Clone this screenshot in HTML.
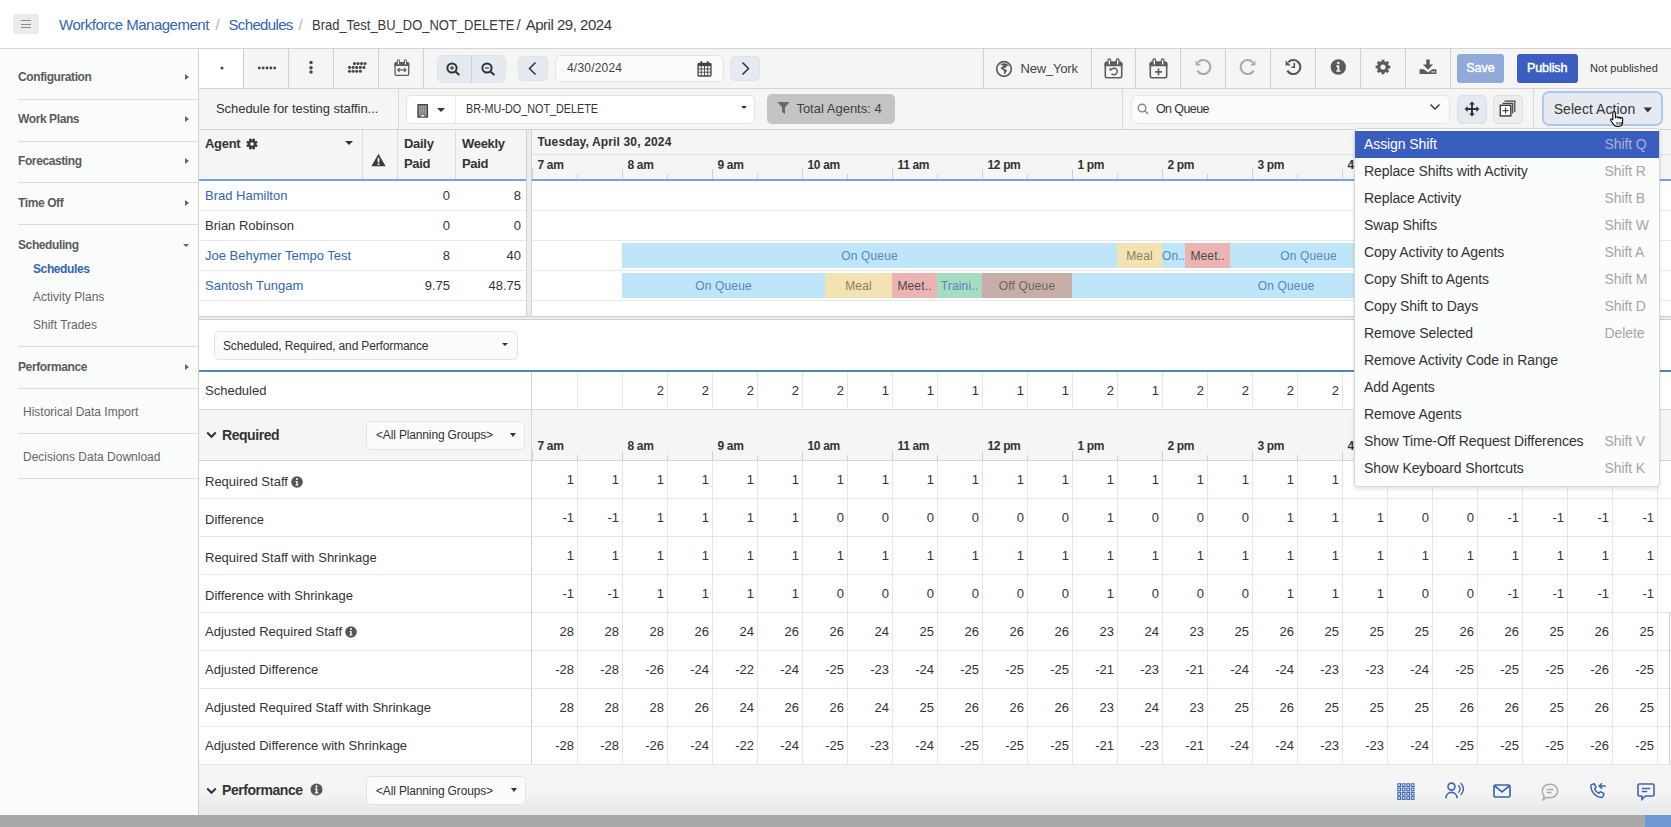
<!DOCTYPE html><html><head><meta charset="utf-8"><title>Schedule</title><style>
*{box-sizing:border-box;margin:0;padding:0}
html,body{width:1671px;height:827px;overflow:hidden;background:#fff}
body{position:relative;font-family:"Liberation Sans",sans-serif;color:#333;font-size:13px}
.abs{position:absolute}
.t{position:absolute;white-space:nowrap;line-height:1}
.vl{position:absolute;width:1px;background:#d2d2d2}
.hl{position:absolute;height:1px;background:#d2d2d2}
.b{font-weight:bold}
.lnk{color:#3266b5}
</style></head><body>
<div class="abs" style="left:13px;top:14px;width:26px;height:20px;background:#ebebeb;border-radius:3px"></div>
<div class="abs" style="left:21px;top:20px;width:10px;height:1.4px;background:#8c8c8c"></div>
<div class="abs" style="left:21px;top:23.5px;width:10px;height:1.4px;background:#8c8c8c"></div>
<div class="abs" style="left:21px;top:27px;width:10px;height:1.4px;background:#8c8c8c"></div>
<div class="t" style="left:59px;top:17.15px;font-size:15px;color:#3266b5;letter-spacing:-0.5px;">Workforce Management</div>
<div class="t" style="left:215.5px;top:17.15px;font-size:15px;color:#b5b5b5;">/</div>
<div class="t" style="left:228.5px;top:17.15px;font-size:15px;color:#3266b5;letter-spacing:-0.65px;">Schedules</div>
<div class="t" style="left:298.5px;top:17.15px;font-size:15px;color:#b5b5b5;">/</div>
<div class="t" style="left:312.2px;top:17.15px;font-size:15px;color:#3a3a3a;transform:scaleX(0.8645);transform-origin:0 0">Brad_Test_BU_DO_NOT_DELETE</div>
<div class="t" style="left:516.5px;top:17.15px;font-size:15px;color:#3a3a3a;">/</div>
<div class="t" style="left:525.7px;top:17.15px;font-size:15px;color:#3a3a3a;letter-spacing:-0.48px;">April 29, 2024</div>
<div class="abs" style="left:0px;top:48px;width:1671px;height:1px;background:#d4d4d4"></div>
<div class="abs" style="left:0px;top:49px;width:198px;height:766px;background:#fafbfb"></div>
<div class="abs" style="left:198px;top:49px;width:1px;height:766px;background:#d0d0d0"></div>
<div class="t" style="left:18px;top:71.08px;font-size:12px;color:#5b5b5b;font-weight:700;letter-spacing:-0.4px;">Configuration</div>
<div class="abs" style="left:185px;top:73.6px;width:0;height:0;border-top:3.4px solid transparent;border-bottom:3.4px solid transparent;border-left:4.4px solid #666"></div>
<div class="abs" style="left:18px;top:98.5px;width:180px;height:1px;background:#dcdcdc"></div>
<div class="t" style="left:18px;top:113.28px;font-size:12px;color:#5b5b5b;font-weight:700;letter-spacing:-0.4px;">Work Plans</div>
<div class="abs" style="left:185px;top:115.8px;width:0;height:0;border-top:3.4px solid transparent;border-bottom:3.4px solid transparent;border-left:4.4px solid #666"></div>
<div class="abs" style="left:18px;top:140.5px;width:180px;height:1px;background:#dcdcdc"></div>
<div class="t" style="left:18px;top:155.28px;font-size:12px;color:#5b5b5b;font-weight:700;letter-spacing:-0.4px;">Forecasting</div>
<div class="abs" style="left:185px;top:157.8px;width:0;height:0;border-top:3.4px solid transparent;border-bottom:3.4px solid transparent;border-left:4.4px solid #666"></div>
<div class="abs" style="left:18px;top:182.4px;width:180px;height:1px;background:#dcdcdc"></div>
<div class="t" style="left:18px;top:197.28px;font-size:12px;color:#5b5b5b;font-weight:700;letter-spacing:-0.4px;">Time Off</div>
<div class="abs" style="left:185px;top:199.8px;width:0;height:0;border-top:3.4px solid transparent;border-bottom:3.4px solid transparent;border-left:4.4px solid #666"></div>
<div class="abs" style="left:18px;top:224.2px;width:180px;height:1px;background:#dcdcdc"></div>
<div class="t" style="left:18px;top:239.18px;font-size:12px;color:#5b5b5b;font-weight:700;letter-spacing:-0.4px;">Scheduling</div>
<div class="abs" style="left:183px;top:243.5px;width:0;height:0;border-left:3.5px solid transparent;border-right:3.5px solid transparent;border-top:3.3px solid #666"></div>
<div class="t" style="left:33px;top:262.78px;font-size:12px;color:#3266b5;font-weight:700;letter-spacing:-0.4px;">Schedules</div>
<div class="t" style="left:33px;top:291.08px;font-size:12px;color:#666;">Activity Plans</div>
<div class="t" style="left:33px;top:318.68px;font-size:12px;color:#666;">Shift Trades</div>
<div class="abs" style="left:18px;top:346px;width:180px;height:1px;background:#dcdcdc"></div>
<div class="t" style="left:18px;top:360.88px;font-size:12px;color:#5b5b5b;font-weight:700;letter-spacing:-0.4px;">Performance</div>
<div class="abs" style="left:185px;top:363.6px;width:0;height:0;border-top:3.4px solid transparent;border-bottom:3.4px solid transparent;border-left:4.4px solid #666"></div>
<div class="abs" style="left:18px;top:388px;width:180px;height:1px;background:#dcdcdc"></div>
<div class="t" style="left:23px;top:405.78px;font-size:12px;color:#666;">Historical Data Import</div>
<div class="abs" style="left:18px;top:433px;width:180px;height:1px;background:#dcdcdc"></div>
<div class="t" style="left:23px;top:450.78px;font-size:12px;color:#666;">Decisions Data Download</div>
<div class="abs" style="left:18px;top:478px;width:180px;height:1px;background:#dcdcdc"></div>
<div class="abs" style="left:199px;top:49px;width:1472px;height:40px;background:#f5f5f5"></div>
<div class="abs" style="left:199px;top:49px;width:44px;height:39px;background:#fff"></div>
<div class="abs" style="left:199px;top:88px;width:1472px;height:1px;background:#d4d4d4"></div>
<div class="abs" style="left:243px;top:49px;width:1px;height:39px;background:#cfcfcf"></div>
<div class="abs" style="left:288px;top:49px;width:1px;height:39px;background:#cfcfcf"></div>
<div class="abs" style="left:333px;top:49px;width:1px;height:39px;background:#cfcfcf"></div>
<div class="abs" style="left:378px;top:49px;width:1px;height:39px;background:#cfcfcf"></div>
<div class="abs" style="left:423px;top:49px;width:1px;height:39px;background:#cfcfcf"></div>
<div class="abs" style="left:983px;top:49px;width:1px;height:39px;background:#cfcfcf"></div>
<div class="abs" style="left:1091px;top:49px;width:1px;height:39px;background:#cfcfcf"></div>
<div class="abs" style="left:1135px;top:49px;width:1px;height:39px;background:#cfcfcf"></div>
<div class="abs" style="left:1180px;top:49px;width:1px;height:39px;background:#cfcfcf"></div>
<div class="abs" style="left:1225px;top:49px;width:1px;height:39px;background:#cfcfcf"></div>
<div class="abs" style="left:1270px;top:49px;width:1px;height:39px;background:#cfcfcf"></div>
<div class="abs" style="left:1315px;top:49px;width:1px;height:39px;background:#cfcfcf"></div>
<div class="abs" style="left:1360px;top:49px;width:1px;height:39px;background:#cfcfcf"></div>
<div class="abs" style="left:1405px;top:49px;width:1px;height:39px;background:#cfcfcf"></div>
<div class="abs" style="left:1450px;top:49px;width:1px;height:39px;background:#cfcfcf"></div>
<svg class="abs" style="left:216px;top:61.7px;" width="12" height="12" viewBox="0 0 12 12"><circle cx="6" cy="6" r="1.6" fill="#4a4a4a"/></svg>
<svg class="abs" style="left:255px;top:61.7px;" width="24" height="12" viewBox="0 0 24 12"><circle cx="4.30" cy="6" r="1.45" fill="#4a4a4a"/><circle cx="8.15" cy="6" r="1.45" fill="#4a4a4a"/><circle cx="12.00" cy="6" r="1.45" fill="#4a4a4a"/><circle cx="15.85" cy="6" r="1.45" fill="#4a4a4a"/><circle cx="19.70" cy="6" r="1.45" fill="#4a4a4a"/></svg>
<svg class="abs" style="left:305.3px;top:58px;" width="12" height="22" viewBox="0 0 12 22"><circle cx="6" cy="4.6" r="1.75" fill="#4a4a4a"/><circle cx="6" cy="9.7" r="1.75" fill="#4a4a4a"/><circle cx="6" cy="14.1" r="1.75" fill="#4a4a4a"/></svg>
<svg class="abs" style="left:346px;top:60.4px;" width="22" height="15" viewBox="0 0 22 15"><circle cx="8.5" cy="3.6" r="1.55" fill="#4a4a4a"/><circle cx="12.0" cy="3.6" r="1.55" fill="#4a4a4a"/><circle cx="15.5" cy="3.6" r="1.55" fill="#4a4a4a"/><circle cx="19.0" cy="3.6" r="1.55" fill="#4a4a4a"/><circle cx="3.5" cy="7.4" r="1.55" fill="#4a4a4a"/><circle cx="7.1" cy="7.4" r="1.55" fill="#4a4a4a"/><circle cx="10.7" cy="7.4" r="1.55" fill="#4a4a4a"/><circle cx="14.3" cy="7.4" r="1.55" fill="#4a4a4a"/><circle cx="17.9" cy="7.4" r="1.55" fill="#4a4a4a"/><circle cx="3.5" cy="11.2" r="1.55" fill="#4a4a4a"/><circle cx="7.1" cy="11.2" r="1.55" fill="#4a4a4a"/><circle cx="10.7" cy="11.2" r="1.55" fill="#4a4a4a"/><circle cx="14.3" cy="11.2" r="1.55" fill="#4a4a4a"/></svg>
<svg class="abs" style="left:394px;top:58.8px;" width="15.77" height="17.43" viewBox="0 0 15.77 17.43"><g transform="scale(0.83)"><rect x="1.3" y="4.3" width="16.4" height="15.4" rx="1.7" fill="none" stroke="#5e5e5e" stroke-width="1.6"/><path d="M0.5 5.9a2.4 2.4 0 0 1 2.4-2.4h13.2a2.4 2.4 0 0 1 2.4 2.4v2.4H0.5z" fill="#5e5e5e"/><rect x="4" y="1" width="2.6" height="6.2" rx="1.3" fill="#fff" stroke="#5e5e5e" stroke-width="1.3"/><rect x="12.4" y="1" width="2.6" height="6.2" rx="1.3" fill="#fff" stroke="#5e5e5e" stroke-width="1.3"/><path d="M4.5 13.2h10M6.8 11l-2.3 2.2 2.3 2.2M12.2 11l2.3 2.2-2.3 2.2" fill="none" stroke="#5e5e5e" stroke-width="1.5"/></g></svg>
<div class="abs" style="left:436.5px;top:54.5px;width:69px;height:28.5px;background:#e5e9f0;border:1px solid #dfe3ea;border-radius:6px"></div>
<div class="abs" style="left:471px;top:55px;width:1px;height:28px;background:#cdd2d9"></div>
<svg class="abs" style="left:445.3px;top:60.8px;" width="16" height="16" viewBox="0 0 16 16"><circle cx="7" cy="7" r="4.6" fill="none" stroke="#333" stroke-width="2"/><path d="M10.4 10.4l3.4 3.2" stroke="#333" stroke-width="2" stroke-linecap="round"/><path d="M5.1 7h3.8" stroke="#444" stroke-width="1.3"/><path d="M7 5.1v3.8" stroke="#444" stroke-width="1.3"/></svg>
<svg class="abs" style="left:480.4px;top:60.8px;" width="16" height="16" viewBox="0 0 16 16"><circle cx="7" cy="7" r="4.6" fill="none" stroke="#333" stroke-width="2"/><path d="M10.4 10.4l3.4 3.2" stroke="#333" stroke-width="2" stroke-linecap="round"/><path d="M5.1 7h3.8" stroke="#444" stroke-width="1.3"/></svg>
<div class="abs" style="left:518px;top:56px;width:30px;height:25px;background:#e5e9f0;border:1px solid #dfe3ea;border-radius:5px"></div>
<svg class="abs" style="left:525px;top:60px;" width="16" height="17" viewBox="0 0 16 17"><path d="M10.5 2.5L4.5 8.5l6 6" fill="none" stroke="#333" stroke-width="1.5"/></svg>
<div class="abs" style="left:730px;top:56px;width:30px;height:25px;background:#e5e9f0;border:1px solid #dfe3ea;border-radius:5px"></div>
<svg class="abs" style="left:737px;top:60px;" width="16" height="17" viewBox="0 0 16 17"><path d="M5.5 2.5l6 6-6 6" fill="none" stroke="#333" stroke-width="1.5"/></svg>
<div class="abs" style="left:554.5px;top:55px;width:169px;height:26.5px;background:#fbfbfb;border:1px solid #e2e4e8;border-radius:6px"></div>
<div class="t" style="left:567px;top:61.58px;font-size:12px;color:#444;letter-spacing:0.2px;">4/30/2024</div>
<svg class="abs" style="left:697px;top:60px;" width="15" height="17" viewBox="0 0 15 17"><rect x="1" y="3.5" width="13" height="12.5" rx="1" fill="none" stroke="#444" stroke-width="1.3"/><rect x="1" y="3.5" width="13" height="2.6" fill="#444"/><path d="M1 9h13M1 12.2h13M4.3 6v10M7.5 6v10M10.7 6v10" stroke="#444" stroke-width="0.9"/><rect x="3.4" y="1" width="1.8" height="4" rx="0.9" fill="#444"/><rect x="9.8" y="1" width="1.8" height="4" rx="0.9" fill="#444"/></svg>
<svg class="abs" style="left:995px;top:59.5px;" width="18" height="18" viewBox="0 0 18 18"><circle cx="9" cy="9" r="7.3" fill="none" stroke="#5e5e5e" stroke-width="1.7"/><path d="M5 4.5c1.5 0.3 2.6 0.6 3.2 1.4c-0.6 0.9-1.9 0.8-2.3 1.9c-0.3 1 0.7 1.7 1.7 1.9c1.2 0.2 1.3 1.3 1.3 2.4c0 1 0.4 2 1.1 2.5c0.5-1 0.7-2.1 1.4-2.8c0.8-0.7 0.6-1.8-0.2-2.3c-0.9-0.5-2-0.5-2.7-1.2c0.6-0.5 1.6-0.4 2.3-0.9c0.6-0.4 0.4-1.2 1.1-1.5c0.8-0.3 1.6 0.1 2.2 0.5c-0.7-1.6-2.2-2.8-4-3.1c-1.3-0.2-2.8 0-4.1 0.6z" fill="#5e5e5e"/></svg>
<div class="t" style="left:1020.6px;top:62.17px;font-size:13px;color:#444;letter-spacing:-0.2px;">New_York</div>
<svg class="abs" style="left:1103.5px;top:57.5px;" width="19.0" height="21.0" viewBox="0 0 19.0 21.0"><g transform="scale(1.0)"><rect x="1.3" y="4.3" width="16.4" height="15.4" rx="1.7" fill="none" stroke="#5e5e5e" stroke-width="1.6"/><path d="M0.5 5.9a2.4 2.4 0 0 1 2.4-2.4h13.2a2.4 2.4 0 0 1 2.4 2.4v2.4H0.5z" fill="#5e5e5e"/><rect x="4" y="1" width="2.6" height="6.2" rx="1.3" fill="#fff" stroke="#5e5e5e" stroke-width="1.3"/><rect x="12.4" y="1" width="2.6" height="6.2" rx="1.3" fill="#fff" stroke="#5e5e5e" stroke-width="1.3"/><path d="M7.4 11.3a3.3 3.3 0 1 1 0.1 4.4" fill="none" stroke="#5e5e5e" stroke-width="1.5"/><path d="M5.4 9.7l0.4 3.4 3-1.3z" fill="#5e5e5e"/></g></svg>
<svg class="abs" style="left:1148.5px;top:57.5px;" width="19.0" height="21.0" viewBox="0 0 19.0 21.0"><g transform="scale(1.0)"><rect x="1.3" y="4.3" width="16.4" height="15.4" rx="1.7" fill="none" stroke="#5e5e5e" stroke-width="1.6"/><path d="M0.5 5.9a2.4 2.4 0 0 1 2.4-2.4h13.2a2.4 2.4 0 0 1 2.4 2.4v2.4H0.5z" fill="#5e5e5e"/><rect x="4" y="1" width="2.6" height="6.2" rx="1.3" fill="#fff" stroke="#5e5e5e" stroke-width="1.3"/><rect x="12.4" y="1" width="2.6" height="6.2" rx="1.3" fill="#fff" stroke="#5e5e5e" stroke-width="1.3"/><path d="M9.5 10.4v6.8M6.1 13.8h6.8" stroke="#5e5e5e" stroke-width="1.7"/></g></svg>
<svg class="abs" style="left:1193.7px;top:57.2px;" width="18" height="18" viewBox="0 0 18 18"><g><path d="M4.3 5.2A7 7 0 1 1 3.3 13.6" fill="none" stroke="#a9a9a9" stroke-width="2.1"/><path d="M1.6 3.4v5.2h5.2z" fill="#a9a9a9"/></g></svg>
<svg class="abs" style="left:1238.5px;top:57.2px;" width="18" height="18" viewBox="0 0 18 18"><g transform="translate(18,0) scale(-1,1)"><path d="M4.3 5.2A7 7 0 1 1 3.3 13.6" fill="none" stroke="#a9a9a9" stroke-width="2.1"/><path d="M1.6 3.4v5.2h5.2z" fill="#a9a9a9"/></g></svg>
<svg class="abs" style="left:1283.5px;top:57.2px;" width="18" height="18" viewBox="0 0 18 18"><g><path d="M4.3 5.2A7 7 0 1 1 3.3 13.6" fill="none" stroke="#555" stroke-width="2.1"/><path d="M1.6 3.4v5.2h5.2z" fill="#555"/><path d="M10.3 6v4.3H7.5" fill="none" stroke="#555" stroke-width="1.6"/></g></svg>
<svg class="abs" style="left:1330px;top:59.1px;" width="17" height="17" viewBox="0 0 17 17"><circle cx="8.3" cy="8" r="7.7" fill="#5a5a5a"/><circle cx="8.3" cy="3.9" r="1.25" fill="#f5f5f5"/><path d="M6.4 6.3h2.9v4.9h1.1v1.6H6.3v-1.6h1.1V7.9h-1z" fill="#f5f5f5"/></svg>
<svg class="abs" style="left:1375.2px;top:59.3px;" width="16" height="16" viewBox="0 0 16 16"><path d="M13.44 6.67 L15.34 6.44 L15.34 9.56 L13.44 9.33 L12.79 10.91 L14.29 12.08 L12.08 14.29 L10.91 12.79 L9.33 13.44 L9.56 15.34 L6.44 15.34 L6.67 13.44 L5.09 12.79 L3.92 14.29 L1.71 12.08 L3.21 10.91 L2.56 9.33 L0.66 9.56 L0.66 6.44 L2.56 6.67 L3.21 5.09 L1.71 3.92 L3.92 1.71 L5.09 3.21 L6.67 2.56 L6.44 0.66 L9.56 0.66 L9.33 2.56 L10.91 3.21 L12.08 1.71 L14.29 3.92 L12.79 5.09Z" fill="#5a5a5a"/><circle cx="8" cy="8" r="5.8" fill="#5a5a5a"/><circle cx="8" cy="8" r="2.6" fill="#f5f5f5"/></svg>
<svg class="abs" style="left:1419px;top:58.5px;" width="18" height="16" viewBox="0 0 18 16"><path d="M7.3 0.6h3.4v5h3.4L9 10.8 3.9 5.6h3.4z" fill="#5a5a5a"/><path d="M0.6 10.2h4.2L9 13.4l4.2-3.2h4.2v4a0.9 0.9 0 0 1-0.9 0.9H1.5a0.9 0.9 0 0 1-0.9-0.9z" fill="#5a5a5a"/><rect x="12.5" y="12.2" width="1.4" height="1.4" fill="#f5f5f5"/><rect x="14.6" y="12.2" width="1.4" height="1.4" fill="#f5f5f5"/></svg>
<div class="abs" style="left:1457px;top:53.5px;width:47px;height:29.5px;background:#91aad9;border-radius:3px"></div>
<div class="t" style="left:1180.5px;width:600px;text-align:center;top:61.67px;font-size:12.5px;color:#fff;-webkit-text-stroke:0.45px #fff;">Save</div>
<div class="abs" style="left:1516.5px;top:53.5px;width:61.5px;height:29.5px;background:#3b5ec0;border-radius:3px"></div>
<div class="t" style="left:1247.2px;width:600px;text-align:center;top:61.67px;font-size:12.5px;color:#fff;-webkit-text-stroke:0.45px #fff;letter-spacing:-0.1px;">Publish</div>
<div class="t" style="left:1590px;top:62.89px;font-size:11px;color:#333;letter-spacing:0.05px;">Not published</div>
<div class="abs" style="left:199px;top:89px;width:1472px;height:40px;background:#f5f5f5"></div>
<div class="abs" style="left:199px;top:129px;width:1472px;height:1px;background:#d4d4d4"></div>
<div class="t" style="left:216px;top:102.07px;font-size:13px;color:#333;letter-spacing:-0.05px;">Schedule for testing staffin...</div>
<div class="abs" style="left:398px;top:89px;width:1px;height:40px;background:#d9d9d9"></div>
<div class="abs" style="left:1122px;top:89px;width:1px;height:40px;background:#d9d9d9"></div>
<div class="abs" style="left:1533px;top:89px;width:1px;height:40px;background:#d9d9d9"></div>
<div class="abs" style="left:405.5px;top:94.5px;width:349px;height:29px;background:#fff;border:1px solid #e3e3e3;border-radius:5px"></div>
<div class="abs" style="left:455px;top:95px;width:1px;height:28px;background:#ececec"></div>
<svg class="abs" style="left:417px;top:103.5px;" width="12" height="14" viewBox="0 0 12 14"><rect x="0.3" y="0.1" width="10.8" height="13.6" rx="0.6" fill="#444"/><rect x="1.5" y="1.4" width="8.4" height="11" fill="#777"/><path d="M2.7 1.4v9.6M4.7 1.4v8.4M6.7 1.4v8.4M8.7 1.4v9.6" stroke="#cfcfcf" stroke-width="0.6"/><path d="M3.6 12.6a2.1 1.6 0 0 1 4.2 0z" fill="#fff"/></svg>
<div class="abs" style="left:437px;top:108.3px;width:0;height:0;border-left:4.0px solid transparent;border-right:4.0px solid transparent;border-top:4.4px solid #333"></div>
<div class="t" style="left:466px;top:103.38px;font-size:12px;color:#333;transform:scaleX(0.9);transform-origin:0 0">BR-MU-DO_NOT_DELETE</div>
<div class="abs" style="left:740.5px;top:105.5px;width:0;height:0;border-left:3.5px solid transparent;border-right:3.5px solid transparent;border-top:3.9px solid #333"></div>
<div class="abs" style="left:767px;top:93.5px;width:127.5px;height:30.5px;background:#c4c4c4;border-radius:5px"></div>
<svg class="abs" style="left:777px;top:101px;" width="14" height="14" viewBox="0 0 14 14"><path d="M0.5 1h12L8 6.5v6.5l-3-2V6.5z" fill="#6a6a6a"/></svg>
<div class="t" style="left:796.4px;top:102.47px;font-size:13px;color:#404040;">Total Agents: 4</div>
<div class="abs" style="left:1131px;top:95px;width:319px;height:28.5px;background:#fbfbfb;border:1px solid #e6e6e6;border-radius:6px"></div>
<svg class="abs" style="left:1137px;top:103px;" width="13" height="13" viewBox="0 0 13 13"><circle cx="5" cy="5" r="3.8" fill="none" stroke="#888" stroke-width="1.4"/><path d="M7.8 7.8l3.2 3.2" stroke="#888" stroke-width="1.5"/></svg>
<div class="t" style="left:1156px;top:102.88px;font-size:12.5px;color:#333;letter-spacing:-0.6px;">On Queue</div>
<svg class="abs" style="left:1429px;top:102px;" width="12" height="10" viewBox="0 0 12 10"><path d="M1.5 2.5l4.5 4.5 4.5-4.5" fill="none" stroke="#333" stroke-width="1.4"/></svg>
<div class="abs" style="left:1457px;top:94.5px;width:30px;height:29px;background:#e5e9f0;border:1px solid #dde1e7;border-radius:5px"></div>
<svg class="abs" style="left:1464px;top:101px;" width="16" height="16" viewBox="0 0 16 16"><path d="M8 0.6l3 3H9v3.4h3.4V5l3 3-3 3V9H9v3.4h2l-3 3-3-3h2V9H3.6v2l-3-3 3-3v2H7V3.6H5z" fill="#333"/></svg>
<div class="abs" style="left:1493px;top:94.5px;width:29.5px;height:29px;background:#ececec;border:1px solid #dedede;border-radius:5px"></div>
<svg class="abs" style="left:1498px;top:99px;" width="19" height="19" viewBox="0 0 19 19"><rect x="2.3" y="6.3" width="10.5" height="10.6" fill="#fff" stroke="#444" stroke-width="1.5"/><path d="M7.55 8.6v6M4.6 11.6h5.9" stroke="#444" stroke-width="1.1"/><path d="M4.5 4.4H14.7V14.6M6.5 2.2H16.8V13" fill="none" stroke="#444" stroke-width="1.2"/></svg>
<div class="abs" style="left:1541.5px;top:91px;width:121px;height:35px;background:#e6eaf0;border:2px solid #a9c8f2;border-radius:7px"></div>
<div class="t" style="left:1553.7px;top:101.66px;font-size:14px;color:#333;letter-spacing:0.05px;">Select Action</div>
<svg class="abs" style="left:1642.5px;top:106.5px;" width="10" height="7" viewBox="0 0 10 7"><path d="M0.6 0.6h8.4L4.8 5.6z" fill="#333"/></svg>
<div class="abs" style="left:199px;top:130px;width:327px;height:49px;background:#f5f5f5"></div>
<div class="abs" style="left:532px;top:130px;width:1139px;height:49px;background:#f5f5f5"></div>
<div class="abs" style="left:362px;top:130px;width:1px;height:49px;background:#dcdcdc"></div>
<div class="abs" style="left:397px;top:130px;width:1px;height:49px;background:#dcdcdc"></div>
<div class="abs" style="left:455px;top:130px;width:1px;height:49px;background:#dcdcdc"></div>
<div class="abs" style="left:526px;top:130px;width:6px;height:186px;background:#ececec;border-left:1px solid #d2d2d2;border-right:1px solid #d2d2d2"></div>
<div class="t" style="left:205px;top:137.47px;font-size:13px;color:#333;font-weight:700;letter-spacing:-0.3px;">Agent</div>
<svg class="abs" style="left:246px;top:137px;" width="12" height="12" viewBox="0 0 12 12"></svg>
<div class="abs" style="left:344.5px;top:141px;width:0;height:0;border-left:4.0px solid transparent;border-right:4.0px solid transparent;border-top:4.4px solid #333"></div>
<svg class="abs" style="left:371px;top:153px;" width="15" height="14" viewBox="0 0 15 14"><path d="M7.5 0.8L14.6 13.2H0.4z" fill="#3a3a3a"/><rect x="6.6" y="4.8" width="1.8" height="4.6" fill="#f5f5f5"/><rect x="6.6" y="10.4" width="1.8" height="1.7" fill="#f5f5f5"/></svg>
<div class="t" style="left:404px;top:137.17px;font-size:13px;color:#333;font-weight:700;letter-spacing:-0.3px;">Daily</div>
<div class="t" style="left:404px;top:157.07px;font-size:13px;color:#333;font-weight:700;letter-spacing:-0.3px;">Paid</div>
<div class="t" style="left:462px;top:137.17px;font-size:13px;color:#333;font-weight:700;letter-spacing:-0.3px;">Weekly</div>
<div class="t" style="left:462px;top:157.07px;font-size:13px;color:#333;font-weight:700;letter-spacing:-0.3px;">Paid</div>
<div class="t" style="left:537.5px;top:136.08px;font-size:12px;color:#333;font-weight:700;letter-spacing:0.15px;">Tuesday, April 30, 2024</div>
<div class="abs" style="left:532px;top:154px;width:1139px;height:1px;background:#e0e0e0"></div>
<div class="t" style="left:537.5px;top:158.68px;font-size:12px;color:#333;font-weight:700;letter-spacing:-0.35px;">7 am</div>
<div class="abs" style="left:532px;top:169px;width:1px;height:10px;background:#cfcfcf"></div>
<div class="abs" style="left:577px;top:174px;width:1px;height:5px;background:#cfcfcf"></div>
<div class="t" style="left:627.5px;top:158.68px;font-size:12px;color:#333;font-weight:700;letter-spacing:-0.35px;">8 am</div>
<div class="abs" style="left:622px;top:169px;width:1px;height:10px;background:#cfcfcf"></div>
<div class="abs" style="left:667px;top:174px;width:1px;height:5px;background:#cfcfcf"></div>
<div class="t" style="left:717.5px;top:158.68px;font-size:12px;color:#333;font-weight:700;letter-spacing:-0.35px;">9 am</div>
<div class="abs" style="left:712px;top:169px;width:1px;height:10px;background:#cfcfcf"></div>
<div class="abs" style="left:757px;top:174px;width:1px;height:5px;background:#cfcfcf"></div>
<div class="t" style="left:807.5px;top:158.68px;font-size:12px;color:#333;font-weight:700;letter-spacing:-0.35px;">10 am</div>
<div class="abs" style="left:802px;top:169px;width:1px;height:10px;background:#cfcfcf"></div>
<div class="abs" style="left:847px;top:174px;width:1px;height:5px;background:#cfcfcf"></div>
<div class="t" style="left:897.5px;top:158.68px;font-size:12px;color:#333;font-weight:700;letter-spacing:-0.35px;">11 am</div>
<div class="abs" style="left:892px;top:169px;width:1px;height:10px;background:#cfcfcf"></div>
<div class="abs" style="left:937px;top:174px;width:1px;height:5px;background:#cfcfcf"></div>
<div class="t" style="left:987.5px;top:158.68px;font-size:12px;color:#333;font-weight:700;letter-spacing:-0.35px;">12 pm</div>
<div class="abs" style="left:982px;top:169px;width:1px;height:10px;background:#cfcfcf"></div>
<div class="abs" style="left:1027px;top:174px;width:1px;height:5px;background:#cfcfcf"></div>
<div class="t" style="left:1077.5px;top:158.68px;font-size:12px;color:#333;font-weight:700;letter-spacing:-0.35px;">1 pm</div>
<div class="abs" style="left:1072px;top:169px;width:1px;height:10px;background:#cfcfcf"></div>
<div class="abs" style="left:1117px;top:174px;width:1px;height:5px;background:#cfcfcf"></div>
<div class="t" style="left:1167.5px;top:158.68px;font-size:12px;color:#333;font-weight:700;letter-spacing:-0.35px;">2 pm</div>
<div class="abs" style="left:1162px;top:169px;width:1px;height:10px;background:#cfcfcf"></div>
<div class="abs" style="left:1207px;top:174px;width:1px;height:5px;background:#cfcfcf"></div>
<div class="t" style="left:1257.5px;top:158.68px;font-size:12px;color:#333;font-weight:700;letter-spacing:-0.35px;">3 pm</div>
<div class="abs" style="left:1252px;top:169px;width:1px;height:10px;background:#cfcfcf"></div>
<div class="abs" style="left:1297px;top:174px;width:1px;height:5px;background:#cfcfcf"></div>
<div class="t" style="left:1347.5px;top:158.68px;font-size:12px;color:#333;font-weight:700;letter-spacing:-0.35px;">4 pm</div>
<div class="abs" style="left:1342px;top:169px;width:1px;height:10px;background:#cfcfcf"></div>
<div class="abs" style="left:1387px;top:174px;width:1px;height:5px;background:#cfcfcf"></div>
<div class="t" style="left:1437.5px;top:158.68px;font-size:12px;color:#333;font-weight:700;letter-spacing:-0.35px;">5 pm</div>
<div class="abs" style="left:1432px;top:169px;width:1px;height:10px;background:#cfcfcf"></div>
<div class="abs" style="left:1477px;top:174px;width:1px;height:5px;background:#cfcfcf"></div>
<div class="t" style="left:1527.5px;top:158.68px;font-size:12px;color:#333;font-weight:700;letter-spacing:-0.35px;">6 pm</div>
<div class="abs" style="left:1522px;top:169px;width:1px;height:10px;background:#cfcfcf"></div>
<div class="abs" style="left:1567px;top:174px;width:1px;height:5px;background:#cfcfcf"></div>
<div class="t" style="left:1617.5px;top:158.68px;font-size:12px;color:#333;font-weight:700;letter-spacing:-0.35px;">7 pm</div>
<div class="abs" style="left:1612px;top:169px;width:1px;height:10px;background:#cfcfcf"></div>
<div class="abs" style="left:1657px;top:174px;width:1px;height:5px;background:#cfcfcf"></div>
<div class="abs" style="left:199px;top:179px;width:327px;height:2px;background:#73a3e6"></div>
<div class="abs" style="left:532px;top:179px;width:1139px;height:2px;background:#73a3e6"></div>
<svg class="abs" style="left:245.5px;top:137.5px;" width="12" height="12" viewBox="0 0 12 12"><path d="M10.16 6.56 L11.71 7.00 L10.74 9.34 L9.34 8.55 L8.55 9.34 L9.34 10.74 L7.00 11.71 L6.56 10.16 L5.44 10.16 L5.00 11.71 L2.66 10.74 L3.45 9.34 L2.66 8.55 L1.26 9.34 L0.29 7.00 L1.84 6.56 L1.84 5.44 L0.29 5.00 L1.26 2.66 L2.66 3.45 L3.45 2.66 L2.66 1.26 L5.00 0.29 L5.44 1.84 L6.56 1.84 L7.00 0.29 L9.34 1.26 L8.55 2.66 L9.34 3.45 L10.74 2.66 L11.71 5.00 L10.16 5.44Z" fill="#3a3a3a"/><circle cx="6" cy="6" r="4.3" fill="#3a3a3a"/><circle cx="6" cy="6" r="1.8" fill="#f5f5f5"/></svg>
<div class="t" style="left:205px;top:189.47px;font-size:13px;color:#3266b5;">Brad Hamilton</div>
<div class="t" style="right:1221px;top:189.47px;font-size:13px;color:#333;">0</div>
<div class="t" style="right:1150px;top:189.47px;font-size:13px;color:#333;">8</div>
<div class="abs" style="left:199px;top:210px;width:327px;height:1px;background:#e8e8e8"></div>
<div class="abs" style="left:532px;top:210px;width:1139px;height:1px;background:#e8e8e8"></div>
<div class="t" style="left:205px;top:219.47px;font-size:13px;color:#333;">Brian Robinson</div>
<div class="t" style="right:1221px;top:219.47px;font-size:13px;color:#333;">0</div>
<div class="t" style="right:1150px;top:219.47px;font-size:13px;color:#333;">0</div>
<div class="abs" style="left:199px;top:240px;width:327px;height:1px;background:#e8e8e8"></div>
<div class="abs" style="left:532px;top:240px;width:1139px;height:1px;background:#e8e8e8"></div>
<div class="t" style="left:205px;top:249.47px;font-size:13px;color:#3266b5;">Joe Behymer Tempo Test</div>
<div class="t" style="right:1221px;top:249.47px;font-size:13px;color:#333;">8</div>
<div class="t" style="right:1150px;top:249.47px;font-size:13px;color:#333;">40</div>
<div class="abs" style="left:199px;top:270px;width:327px;height:1px;background:#e8e8e8"></div>
<div class="abs" style="left:532px;top:270px;width:1139px;height:1px;background:#e8e8e8"></div>
<div class="t" style="left:205px;top:279.47px;font-size:13px;color:#3266b5;">Santosh Tungam</div>
<div class="t" style="right:1221px;top:279.47px;font-size:13px;color:#333;">9.75</div>
<div class="t" style="right:1150px;top:279.47px;font-size:13px;color:#333;">48.75</div>
<div class="abs" style="left:199px;top:300px;width:327px;height:1px;background:#e8e8e8"></div>
<div class="abs" style="left:532px;top:300px;width:1139px;height:1px;background:#e8e8e8"></div>
<div class="abs" style="left:622px;top:243px;width:495px;height:25px;background:#bee5f8"></div>
<div class="t" style="left:622px;top:243px;width:495px;height:25px;line-height:27px;text-align:center;font-size:12px;letter-spacing:0.15px;color:#5b86c0;overflow:hidden;text-overflow:clip">On Queue</div>
<div class="abs" style="left:1117px;top:243px;width:45px;height:25px;background:#f3e3b3"></div>
<div class="t" style="left:1117px;top:243px;width:45px;height:25px;line-height:27px;text-align:center;font-size:12px;letter-spacing:0.15px;color:#8b7d65;overflow:hidden;text-overflow:clip">Meal</div>
<div class="abs" style="left:1162px;top:243px;width:23px;height:25px;background:#bee5f8"></div>
<div class="t" style="left:1162px;top:243px;width:23px;height:25px;line-height:27px;text-align:center;font-size:12px;letter-spacing:0.15px;color:#5b86c0;overflow:hidden;text-overflow:clip">On..</div>
<div class="abs" style="left:1185px;top:243px;width:45px;height:25px;background:#ecb3b3"></div>
<div class="t" style="left:1185px;top:243px;width:45px;height:25px;line-height:27px;text-align:center;font-size:12px;letter-spacing:0.15px;color:#4a4a4a;overflow:hidden;text-overflow:clip">Meet..</div>
<div class="abs" style="left:1230px;top:243px;width:157px;height:25px;background:#bee5f8"></div>
<div class="t" style="left:1230px;top:243px;width:157px;height:25px;line-height:27px;text-align:center;font-size:12px;letter-spacing:0.15px;color:#5b86c0;overflow:hidden;text-overflow:clip">On Queue</div>
<div class="abs" style="left:622px;top:273px;width:203px;height:25px;background:#bee5f8"></div>
<div class="t" style="left:622px;top:273px;width:203px;height:25px;line-height:27px;text-align:center;font-size:12px;letter-spacing:0.15px;color:#5b86c0;overflow:hidden;text-overflow:clip">On Queue</div>
<div class="abs" style="left:825px;top:273px;width:67px;height:25px;background:#f3e3b3"></div>
<div class="t" style="left:825px;top:273px;width:67px;height:25px;line-height:27px;text-align:center;font-size:12px;letter-spacing:0.15px;color:#8b7d65;overflow:hidden;text-overflow:clip">Meal</div>
<div class="abs" style="left:892px;top:273px;width:45px;height:25px;background:#ecb3b3"></div>
<div class="t" style="left:892px;top:273px;width:45px;height:25px;line-height:27px;text-align:center;font-size:12px;letter-spacing:0.15px;color:#4a4a4a;overflow:hidden;text-overflow:clip">Meet..</div>
<div class="abs" style="left:937px;top:273px;width:45px;height:25px;background:#a5dcc2"></div>
<div class="t" style="left:937px;top:273px;width:45px;height:25px;line-height:27px;text-align:center;font-size:12px;letter-spacing:0.15px;color:#5a84b8;overflow:hidden;text-overflow:clip">Traini..</div>
<div class="abs" style="left:982px;top:273px;width:90px;height:25px;background:#c8aea8"></div>
<div class="t" style="left:982px;top:273px;width:90px;height:25px;line-height:27px;text-align:center;font-size:12px;letter-spacing:0.15px;color:#6c6460;overflow:hidden;text-overflow:clip">Off Queue</div>
<div class="abs" style="left:1072px;top:273px;width:428px;height:25px;background:#bee5f8"></div>
<div class="t" style="left:1072px;top:273px;width:428px;height:25px;line-height:27px;text-align:center;font-size:12px;letter-spacing:0.15px;color:#5b86c0;overflow:hidden;text-overflow:clip">On Queue</div>
<div class="abs" style="left:199px;top:316px;width:1472px;height:4px;background:#ececec;border-top:1px solid #cfcfcf;border-bottom:1px solid #cfcfcf"></div>
<div class="abs" style="left:213.5px;top:331px;width:304px;height:29px;background:#fbfbfb;border:1px solid #e3e3e3;border-radius:5px"></div>
<div class="t" style="left:223px;top:339.78px;font-size:12px;color:#333;letter-spacing:-0.15px;">Scheduled, Required, and Performance</div>
<div class="abs" style="left:501.5px;top:342.5px;width:0;height:0;border-left:3.5px solid transparent;border-right:3.5px solid transparent;border-top:3.9px solid #333"></div>
<div class="abs" style="left:199px;top:370px;width:1472px;height:2px;background:#4f87b6"></div>
<div class="t" style="left:205px;top:384.47px;font-size:13px;color:#333;">Scheduled</div>
<div class="abs" style="left:531px;top:372px;width:1px;height:37px;background:#d0d0d0"></div>
<div class="abs" style="left:577px;top:372px;width:1px;height:37px;background:#e6e6e6"></div>
<div class="abs" style="left:622px;top:372px;width:1px;height:37px;background:#e6e6e6"></div>
<div class="abs" style="left:667px;top:372px;width:1px;height:37px;background:#e6e6e6"></div>
<div class="abs" style="left:712px;top:372px;width:1px;height:37px;background:#e6e6e6"></div>
<div class="abs" style="left:757px;top:372px;width:1px;height:37px;background:#e6e6e6"></div>
<div class="abs" style="left:802px;top:372px;width:1px;height:37px;background:#e6e6e6"></div>
<div class="abs" style="left:847px;top:372px;width:1px;height:37px;background:#e6e6e6"></div>
<div class="abs" style="left:892px;top:372px;width:1px;height:37px;background:#e6e6e6"></div>
<div class="abs" style="left:937px;top:372px;width:1px;height:37px;background:#e6e6e6"></div>
<div class="abs" style="left:982px;top:372px;width:1px;height:37px;background:#e6e6e6"></div>
<div class="abs" style="left:1027px;top:372px;width:1px;height:37px;background:#e6e6e6"></div>
<div class="abs" style="left:1072px;top:372px;width:1px;height:37px;background:#e6e6e6"></div>
<div class="abs" style="left:1117px;top:372px;width:1px;height:37px;background:#e6e6e6"></div>
<div class="abs" style="left:1162px;top:372px;width:1px;height:37px;background:#e6e6e6"></div>
<div class="abs" style="left:1207px;top:372px;width:1px;height:37px;background:#e6e6e6"></div>
<div class="abs" style="left:1252px;top:372px;width:1px;height:37px;background:#e6e6e6"></div>
<div class="abs" style="left:1297px;top:372px;width:1px;height:37px;background:#e6e6e6"></div>
<div class="abs" style="left:1342px;top:372px;width:1px;height:37px;background:#e6e6e6"></div>
<div class="abs" style="left:1387px;top:372px;width:1px;height:37px;background:#e6e6e6"></div>
<div class="abs" style="left:1432px;top:372px;width:1px;height:37px;background:#e6e6e6"></div>
<div class="abs" style="left:1477px;top:372px;width:1px;height:37px;background:#e6e6e6"></div>
<div class="abs" style="left:1522px;top:372px;width:1px;height:37px;background:#e6e6e6"></div>
<div class="abs" style="left:1567px;top:372px;width:1px;height:37px;background:#e6e6e6"></div>
<div class="abs" style="left:1612px;top:372px;width:1px;height:37px;background:#e6e6e6"></div>
<div class="abs" style="left:1657px;top:372px;width:1px;height:37px;background:#e6e6e6"></div>
<div class="t" style="right:1007px;top:384.47px;font-size:13px;color:#333;">2</div>
<div class="t" style="right:962px;top:384.47px;font-size:13px;color:#333;">2</div>
<div class="t" style="right:917px;top:384.47px;font-size:13px;color:#333;">2</div>
<div class="t" style="right:872px;top:384.47px;font-size:13px;color:#333;">2</div>
<div class="t" style="right:827px;top:384.47px;font-size:13px;color:#333;">2</div>
<div class="t" style="right:782px;top:384.47px;font-size:13px;color:#333;">1</div>
<div class="t" style="right:737px;top:384.47px;font-size:13px;color:#333;">1</div>
<div class="t" style="right:692px;top:384.47px;font-size:13px;color:#333;">1</div>
<div class="t" style="right:647px;top:384.47px;font-size:13px;color:#333;">1</div>
<div class="t" style="right:602px;top:384.47px;font-size:13px;color:#333;">1</div>
<div class="t" style="right:557px;top:384.47px;font-size:13px;color:#333;">2</div>
<div class="t" style="right:512px;top:384.47px;font-size:13px;color:#333;">1</div>
<div class="t" style="right:467px;top:384.47px;font-size:13px;color:#333;">2</div>
<div class="t" style="right:422px;top:384.47px;font-size:13px;color:#333;">2</div>
<div class="t" style="right:377px;top:384.47px;font-size:13px;color:#333;">2</div>
<div class="t" style="right:332px;top:384.47px;font-size:13px;color:#333;">2</div>
<div class="t" style="right:287px;top:384.47px;font-size:13px;color:#333;">2</div>
<div class="t" style="right:242px;top:384.47px;font-size:13px;color:#333;">2</div>
<div class="t" style="right:197px;top:384.47px;font-size:13px;color:#333;">2</div>
<div class="t" style="right:152px;top:384.47px;font-size:13px;color:#333;">2</div>
<div class="t" style="right:107px;top:384.47px;font-size:13px;color:#333;">2</div>
<div class="t" style="right:62px;top:384.47px;font-size:13px;color:#333;">2</div>
<div class="t" style="right:17px;top:384.47px;font-size:13px;color:#333;">2</div>
<div class="abs" style="left:199px;top:409px;width:1472px;height:1px;background:#dadada"></div>
<div class="abs" style="left:199px;top:410px;width:1472px;height:50px;background:#f5f5f5"></div>
<svg class="abs" style="left:205.5px;top:431px;" width="11" height="8" viewBox="0 0 11 8"><path d="M1.2 1.5l4.3 4.3 4.3-4.3" fill="none" stroke="#333" stroke-width="2"/></svg>
<div class="t" style="left:222px;top:428.06px;font-size:14px;color:#333;font-weight:700;letter-spacing:-0.45px;">Required</div>
<div class="abs" style="left:365.5px;top:420.5px;width:159px;height:29px;background:#fbfbfb;border:1px solid #e3e3e3;border-radius:5px"></div>
<div class="t" style="left:376px;top:429.28px;font-size:12px;color:#333;letter-spacing:-0.15px;">&lt;All Planning Groups&gt;</div>
<div class="abs" style="left:509.5px;top:432.5px;width:0;height:0;border-left:3.75px solid transparent;border-right:3.75px solid transparent;border-top:4.1px solid #333"></div>
<div class="abs" style="left:531px;top:410px;width:1px;height:50px;background:#d6d6d6"></div>
<div class="t" style="left:537.5px;top:439.98px;font-size:12px;color:#333;font-weight:700;letter-spacing:-0.35px;">7 am</div>
<div class="abs" style="left:532px;top:451px;width:1px;height:9px;background:#cfcfcf"></div>
<div class="abs" style="left:577px;top:455px;width:1px;height:5px;background:#cfcfcf"></div>
<div class="t" style="left:627.5px;top:439.98px;font-size:12px;color:#333;font-weight:700;letter-spacing:-0.35px;">8 am</div>
<div class="abs" style="left:622px;top:451px;width:1px;height:9px;background:#cfcfcf"></div>
<div class="abs" style="left:667px;top:455px;width:1px;height:5px;background:#cfcfcf"></div>
<div class="t" style="left:717.5px;top:439.98px;font-size:12px;color:#333;font-weight:700;letter-spacing:-0.35px;">9 am</div>
<div class="abs" style="left:712px;top:451px;width:1px;height:9px;background:#cfcfcf"></div>
<div class="abs" style="left:757px;top:455px;width:1px;height:5px;background:#cfcfcf"></div>
<div class="t" style="left:807.5px;top:439.98px;font-size:12px;color:#333;font-weight:700;letter-spacing:-0.35px;">10 am</div>
<div class="abs" style="left:802px;top:451px;width:1px;height:9px;background:#cfcfcf"></div>
<div class="abs" style="left:847px;top:455px;width:1px;height:5px;background:#cfcfcf"></div>
<div class="t" style="left:897.5px;top:439.98px;font-size:12px;color:#333;font-weight:700;letter-spacing:-0.35px;">11 am</div>
<div class="abs" style="left:892px;top:451px;width:1px;height:9px;background:#cfcfcf"></div>
<div class="abs" style="left:937px;top:455px;width:1px;height:5px;background:#cfcfcf"></div>
<div class="t" style="left:987.5px;top:439.98px;font-size:12px;color:#333;font-weight:700;letter-spacing:-0.35px;">12 pm</div>
<div class="abs" style="left:982px;top:451px;width:1px;height:9px;background:#cfcfcf"></div>
<div class="abs" style="left:1027px;top:455px;width:1px;height:5px;background:#cfcfcf"></div>
<div class="t" style="left:1077.5px;top:439.98px;font-size:12px;color:#333;font-weight:700;letter-spacing:-0.35px;">1 pm</div>
<div class="abs" style="left:1072px;top:451px;width:1px;height:9px;background:#cfcfcf"></div>
<div class="abs" style="left:1117px;top:455px;width:1px;height:5px;background:#cfcfcf"></div>
<div class="t" style="left:1167.5px;top:439.98px;font-size:12px;color:#333;font-weight:700;letter-spacing:-0.35px;">2 pm</div>
<div class="abs" style="left:1162px;top:451px;width:1px;height:9px;background:#cfcfcf"></div>
<div class="abs" style="left:1207px;top:455px;width:1px;height:5px;background:#cfcfcf"></div>
<div class="t" style="left:1257.5px;top:439.98px;font-size:12px;color:#333;font-weight:700;letter-spacing:-0.35px;">3 pm</div>
<div class="abs" style="left:1252px;top:451px;width:1px;height:9px;background:#cfcfcf"></div>
<div class="abs" style="left:1297px;top:455px;width:1px;height:5px;background:#cfcfcf"></div>
<div class="t" style="left:1347.5px;top:439.98px;font-size:12px;color:#333;font-weight:700;letter-spacing:-0.35px;">4 pm</div>
<div class="abs" style="left:1342px;top:451px;width:1px;height:9px;background:#cfcfcf"></div>
<div class="abs" style="left:1387px;top:455px;width:1px;height:5px;background:#cfcfcf"></div>
<div class="t" style="left:1437.5px;top:439.98px;font-size:12px;color:#333;font-weight:700;letter-spacing:-0.35px;">5 pm</div>
<div class="abs" style="left:1432px;top:451px;width:1px;height:9px;background:#cfcfcf"></div>
<div class="abs" style="left:1477px;top:455px;width:1px;height:5px;background:#cfcfcf"></div>
<div class="t" style="left:1527.5px;top:439.98px;font-size:12px;color:#333;font-weight:700;letter-spacing:-0.35px;">6 pm</div>
<div class="abs" style="left:1522px;top:451px;width:1px;height:9px;background:#cfcfcf"></div>
<div class="abs" style="left:1567px;top:455px;width:1px;height:5px;background:#cfcfcf"></div>
<div class="t" style="left:1617.5px;top:439.98px;font-size:12px;color:#333;font-weight:700;letter-spacing:-0.35px;">7 pm</div>
<div class="abs" style="left:1612px;top:451px;width:1px;height:9px;background:#cfcfcf"></div>
<div class="abs" style="left:1657px;top:455px;width:1px;height:5px;background:#cfcfcf"></div>
<div class="abs" style="left:199px;top:460px;width:1472px;height:1px;background:#d6d6d6"></div>
<div class="abs" style="left:531px;top:461px;width:1px;height:303px;background:#d0d0d0"></div>
<div class="abs" style="left:577px;top:461px;width:1px;height:303px;background:#e6e6e6"></div>
<div class="abs" style="left:622px;top:461px;width:1px;height:303px;background:#e6e6e6"></div>
<div class="abs" style="left:667px;top:461px;width:1px;height:303px;background:#e6e6e6"></div>
<div class="abs" style="left:712px;top:461px;width:1px;height:303px;background:#e6e6e6"></div>
<div class="abs" style="left:757px;top:461px;width:1px;height:303px;background:#e6e6e6"></div>
<div class="abs" style="left:802px;top:461px;width:1px;height:303px;background:#e6e6e6"></div>
<div class="abs" style="left:847px;top:461px;width:1px;height:303px;background:#e6e6e6"></div>
<div class="abs" style="left:892px;top:461px;width:1px;height:303px;background:#e6e6e6"></div>
<div class="abs" style="left:937px;top:461px;width:1px;height:303px;background:#e6e6e6"></div>
<div class="abs" style="left:982px;top:461px;width:1px;height:303px;background:#e6e6e6"></div>
<div class="abs" style="left:1027px;top:461px;width:1px;height:303px;background:#e6e6e6"></div>
<div class="abs" style="left:1072px;top:461px;width:1px;height:303px;background:#e6e6e6"></div>
<div class="abs" style="left:1117px;top:461px;width:1px;height:303px;background:#e6e6e6"></div>
<div class="abs" style="left:1162px;top:461px;width:1px;height:303px;background:#e6e6e6"></div>
<div class="abs" style="left:1207px;top:461px;width:1px;height:303px;background:#e6e6e6"></div>
<div class="abs" style="left:1252px;top:461px;width:1px;height:303px;background:#e6e6e6"></div>
<div class="abs" style="left:1297px;top:461px;width:1px;height:303px;background:#e6e6e6"></div>
<div class="abs" style="left:1342px;top:461px;width:1px;height:303px;background:#e6e6e6"></div>
<div class="abs" style="left:1387px;top:461px;width:1px;height:303px;background:#e6e6e6"></div>
<div class="abs" style="left:1432px;top:461px;width:1px;height:303px;background:#e6e6e6"></div>
<div class="abs" style="left:1477px;top:461px;width:1px;height:303px;background:#e6e6e6"></div>
<div class="abs" style="left:1522px;top:461px;width:1px;height:303px;background:#e6e6e6"></div>
<div class="abs" style="left:1567px;top:461px;width:1px;height:303px;background:#e6e6e6"></div>
<div class="abs" style="left:1612px;top:461px;width:1px;height:303px;background:#e6e6e6"></div>
<div class="abs" style="left:1657px;top:461px;width:1px;height:303px;background:#e6e6e6"></div>
<div class="t" style="left:205px;top:475.47px;font-size:13px;color:#333;">Required Staff</div>
<svg class="abs" style="left:291px;top:475.5px;" width="12" height="12" viewBox="0 0 12 12"><circle cx="6" cy="6" r="5.8" fill="#555"/><circle cx="6" cy="3.1" r="1" fill="#fff"/><path d="M4.6 4.9h2.1v3.6h0.8v1.1H4.5V8.5h0.8V6h-0.7z" fill="#fff"/></svg>
<div class="t" style="right:1097px;top:473.47px;font-size:13px;color:#333;">1</div>
<div class="t" style="right:1052px;top:473.47px;font-size:13px;color:#333;">1</div>
<div class="t" style="right:1007px;top:473.47px;font-size:13px;color:#333;">1</div>
<div class="t" style="right:962px;top:473.47px;font-size:13px;color:#333;">1</div>
<div class="t" style="right:917px;top:473.47px;font-size:13px;color:#333;">1</div>
<div class="t" style="right:872px;top:473.47px;font-size:13px;color:#333;">1</div>
<div class="t" style="right:827px;top:473.47px;font-size:13px;color:#333;">1</div>
<div class="t" style="right:782px;top:473.47px;font-size:13px;color:#333;">1</div>
<div class="t" style="right:737px;top:473.47px;font-size:13px;color:#333;">1</div>
<div class="t" style="right:692px;top:473.47px;font-size:13px;color:#333;">1</div>
<div class="t" style="right:647px;top:473.47px;font-size:13px;color:#333;">1</div>
<div class="t" style="right:602px;top:473.47px;font-size:13px;color:#333;">1</div>
<div class="t" style="right:557px;top:473.47px;font-size:13px;color:#333;">1</div>
<div class="t" style="right:512px;top:473.47px;font-size:13px;color:#333;">1</div>
<div class="t" style="right:467px;top:473.47px;font-size:13px;color:#333;">1</div>
<div class="t" style="right:422px;top:473.47px;font-size:13px;color:#333;">1</div>
<div class="t" style="right:377px;top:473.47px;font-size:13px;color:#333;">1</div>
<div class="t" style="right:332px;top:473.47px;font-size:13px;color:#333;">1</div>
<div class="t" style="right:287px;top:473.47px;font-size:13px;color:#333;">1</div>
<div class="t" style="right:242px;top:473.47px;font-size:13px;color:#333;">1</div>
<div class="t" style="right:197px;top:473.47px;font-size:13px;color:#333;">1</div>
<div class="t" style="right:152px;top:473.47px;font-size:13px;color:#333;">1</div>
<div class="t" style="right:107px;top:473.47px;font-size:13px;color:#333;">1</div>
<div class="t" style="right:62px;top:473.47px;font-size:13px;color:#333;">1</div>
<div class="t" style="right:17px;top:473.47px;font-size:13px;color:#333;">1</div>
<div class="abs" style="left:199px;top:498px;width:1472px;height:1px;background:#e6e6e6"></div>
<div class="t" style="left:205px;top:513.47px;font-size:13px;color:#333;">Difference</div>
<div class="t" style="right:1097px;top:511.47px;font-size:13px;color:#333;">-1</div>
<div class="t" style="right:1052px;top:511.47px;font-size:13px;color:#333;">-1</div>
<div class="t" style="right:1007px;top:511.47px;font-size:13px;color:#333;">1</div>
<div class="t" style="right:962px;top:511.47px;font-size:13px;color:#333;">1</div>
<div class="t" style="right:917px;top:511.47px;font-size:13px;color:#333;">1</div>
<div class="t" style="right:872px;top:511.47px;font-size:13px;color:#333;">1</div>
<div class="t" style="right:827px;top:511.47px;font-size:13px;color:#333;">0</div>
<div class="t" style="right:782px;top:511.47px;font-size:13px;color:#333;">0</div>
<div class="t" style="right:737px;top:511.47px;font-size:13px;color:#333;">0</div>
<div class="t" style="right:692px;top:511.47px;font-size:13px;color:#333;">0</div>
<div class="t" style="right:647px;top:511.47px;font-size:13px;color:#333;">0</div>
<div class="t" style="right:602px;top:511.47px;font-size:13px;color:#333;">0</div>
<div class="t" style="right:557px;top:511.47px;font-size:13px;color:#333;">1</div>
<div class="t" style="right:512px;top:511.47px;font-size:13px;color:#333;">0</div>
<div class="t" style="right:467px;top:511.47px;font-size:13px;color:#333;">0</div>
<div class="t" style="right:422px;top:511.47px;font-size:13px;color:#333;">0</div>
<div class="t" style="right:377px;top:511.47px;font-size:13px;color:#333;">1</div>
<div class="t" style="right:332px;top:511.47px;font-size:13px;color:#333;">1</div>
<div class="t" style="right:287px;top:511.47px;font-size:13px;color:#333;">1</div>
<div class="t" style="right:242px;top:511.47px;font-size:13px;color:#333;">0</div>
<div class="t" style="right:197px;top:511.47px;font-size:13px;color:#333;">0</div>
<div class="t" style="right:152px;top:511.47px;font-size:13px;color:#333;">-1</div>
<div class="t" style="right:107px;top:511.47px;font-size:13px;color:#333;">-1</div>
<div class="t" style="right:62px;top:511.47px;font-size:13px;color:#333;">-1</div>
<div class="t" style="right:17px;top:511.47px;font-size:13px;color:#333;">-1</div>
<div class="abs" style="left:199px;top:536px;width:1472px;height:1px;background:#e6e6e6"></div>
<div class="t" style="left:205px;top:551.47px;font-size:13px;color:#333;">Required Staff with Shrinkage</div>
<div class="t" style="right:1097px;top:549.47px;font-size:13px;color:#333;">1</div>
<div class="t" style="right:1052px;top:549.47px;font-size:13px;color:#333;">1</div>
<div class="t" style="right:1007px;top:549.47px;font-size:13px;color:#333;">1</div>
<div class="t" style="right:962px;top:549.47px;font-size:13px;color:#333;">1</div>
<div class="t" style="right:917px;top:549.47px;font-size:13px;color:#333;">1</div>
<div class="t" style="right:872px;top:549.47px;font-size:13px;color:#333;">1</div>
<div class="t" style="right:827px;top:549.47px;font-size:13px;color:#333;">1</div>
<div class="t" style="right:782px;top:549.47px;font-size:13px;color:#333;">1</div>
<div class="t" style="right:737px;top:549.47px;font-size:13px;color:#333;">1</div>
<div class="t" style="right:692px;top:549.47px;font-size:13px;color:#333;">1</div>
<div class="t" style="right:647px;top:549.47px;font-size:13px;color:#333;">1</div>
<div class="t" style="right:602px;top:549.47px;font-size:13px;color:#333;">1</div>
<div class="t" style="right:557px;top:549.47px;font-size:13px;color:#333;">1</div>
<div class="t" style="right:512px;top:549.47px;font-size:13px;color:#333;">1</div>
<div class="t" style="right:467px;top:549.47px;font-size:13px;color:#333;">1</div>
<div class="t" style="right:422px;top:549.47px;font-size:13px;color:#333;">1</div>
<div class="t" style="right:377px;top:549.47px;font-size:13px;color:#333;">1</div>
<div class="t" style="right:332px;top:549.47px;font-size:13px;color:#333;">1</div>
<div class="t" style="right:287px;top:549.47px;font-size:13px;color:#333;">1</div>
<div class="t" style="right:242px;top:549.47px;font-size:13px;color:#333;">1</div>
<div class="t" style="right:197px;top:549.47px;font-size:13px;color:#333;">1</div>
<div class="t" style="right:152px;top:549.47px;font-size:13px;color:#333;">1</div>
<div class="t" style="right:107px;top:549.47px;font-size:13px;color:#333;">1</div>
<div class="t" style="right:62px;top:549.47px;font-size:13px;color:#333;">1</div>
<div class="t" style="right:17px;top:549.47px;font-size:13px;color:#333;">1</div>
<div class="abs" style="left:199px;top:574px;width:1472px;height:1px;background:#e6e6e6"></div>
<div class="t" style="left:205px;top:589.47px;font-size:13px;color:#333;">Difference with Shrinkage</div>
<div class="t" style="right:1097px;top:587.47px;font-size:13px;color:#333;">-1</div>
<div class="t" style="right:1052px;top:587.47px;font-size:13px;color:#333;">-1</div>
<div class="t" style="right:1007px;top:587.47px;font-size:13px;color:#333;">1</div>
<div class="t" style="right:962px;top:587.47px;font-size:13px;color:#333;">1</div>
<div class="t" style="right:917px;top:587.47px;font-size:13px;color:#333;">1</div>
<div class="t" style="right:872px;top:587.47px;font-size:13px;color:#333;">1</div>
<div class="t" style="right:827px;top:587.47px;font-size:13px;color:#333;">0</div>
<div class="t" style="right:782px;top:587.47px;font-size:13px;color:#333;">0</div>
<div class="t" style="right:737px;top:587.47px;font-size:13px;color:#333;">0</div>
<div class="t" style="right:692px;top:587.47px;font-size:13px;color:#333;">0</div>
<div class="t" style="right:647px;top:587.47px;font-size:13px;color:#333;">0</div>
<div class="t" style="right:602px;top:587.47px;font-size:13px;color:#333;">0</div>
<div class="t" style="right:557px;top:587.47px;font-size:13px;color:#333;">1</div>
<div class="t" style="right:512px;top:587.47px;font-size:13px;color:#333;">0</div>
<div class="t" style="right:467px;top:587.47px;font-size:13px;color:#333;">0</div>
<div class="t" style="right:422px;top:587.47px;font-size:13px;color:#333;">0</div>
<div class="t" style="right:377px;top:587.47px;font-size:13px;color:#333;">1</div>
<div class="t" style="right:332px;top:587.47px;font-size:13px;color:#333;">1</div>
<div class="t" style="right:287px;top:587.47px;font-size:13px;color:#333;">1</div>
<div class="t" style="right:242px;top:587.47px;font-size:13px;color:#333;">0</div>
<div class="t" style="right:197px;top:587.47px;font-size:13px;color:#333;">0</div>
<div class="t" style="right:152px;top:587.47px;font-size:13px;color:#333;">-1</div>
<div class="t" style="right:107px;top:587.47px;font-size:13px;color:#333;">-1</div>
<div class="t" style="right:62px;top:587.47px;font-size:13px;color:#333;">-1</div>
<div class="t" style="right:17px;top:587.47px;font-size:13px;color:#333;">-1</div>
<div class="abs" style="left:199px;top:612px;width:1472px;height:1px;background:#e6e6e6"></div>
<div class="t" style="left:205px;top:625.47px;font-size:13px;color:#333;">Adjusted Required Staff</div>
<svg class="abs" style="left:345px;top:625.5px;" width="12" height="12" viewBox="0 0 12 12"><circle cx="6" cy="6" r="5.8" fill="#555"/><circle cx="6" cy="3.1" r="1" fill="#fff"/><path d="M4.6 4.9h2.1v3.6h0.8v1.1H4.5V8.5h0.8V6h-0.7z" fill="#fff"/></svg>
<div class="t" style="right:1097px;top:625.47px;font-size:13px;color:#333;">28</div>
<div class="t" style="right:1052px;top:625.47px;font-size:13px;color:#333;">28</div>
<div class="t" style="right:1007px;top:625.47px;font-size:13px;color:#333;">28</div>
<div class="t" style="right:962px;top:625.47px;font-size:13px;color:#333;">26</div>
<div class="t" style="right:917px;top:625.47px;font-size:13px;color:#333;">24</div>
<div class="t" style="right:872px;top:625.47px;font-size:13px;color:#333;">26</div>
<div class="t" style="right:827px;top:625.47px;font-size:13px;color:#333;">26</div>
<div class="t" style="right:782px;top:625.47px;font-size:13px;color:#333;">24</div>
<div class="t" style="right:737px;top:625.47px;font-size:13px;color:#333;">25</div>
<div class="t" style="right:692px;top:625.47px;font-size:13px;color:#333;">26</div>
<div class="t" style="right:647px;top:625.47px;font-size:13px;color:#333;">26</div>
<div class="t" style="right:602px;top:625.47px;font-size:13px;color:#333;">26</div>
<div class="t" style="right:557px;top:625.47px;font-size:13px;color:#333;">23</div>
<div class="t" style="right:512px;top:625.47px;font-size:13px;color:#333;">24</div>
<div class="t" style="right:467px;top:625.47px;font-size:13px;color:#333;">23</div>
<div class="t" style="right:422px;top:625.47px;font-size:13px;color:#333;">25</div>
<div class="t" style="right:377px;top:625.47px;font-size:13px;color:#333;">26</div>
<div class="t" style="right:332px;top:625.47px;font-size:13px;color:#333;">25</div>
<div class="t" style="right:287px;top:625.47px;font-size:13px;color:#333;">25</div>
<div class="t" style="right:242px;top:625.47px;font-size:13px;color:#333;">25</div>
<div class="t" style="right:197px;top:625.47px;font-size:13px;color:#333;">26</div>
<div class="t" style="right:152px;top:625.47px;font-size:13px;color:#333;">26</div>
<div class="t" style="right:107px;top:625.47px;font-size:13px;color:#333;">25</div>
<div class="t" style="right:62px;top:625.47px;font-size:13px;color:#333;">26</div>
<div class="t" style="right:17px;top:625.47px;font-size:13px;color:#333;">25</div>
<div class="abs" style="left:199px;top:650px;width:1472px;height:1px;background:#e6e6e6"></div>
<div class="t" style="left:205px;top:663.47px;font-size:13px;color:#333;">Adjusted Difference</div>
<div class="t" style="right:1097px;top:663.47px;font-size:13px;color:#333;">-28</div>
<div class="t" style="right:1052px;top:663.47px;font-size:13px;color:#333;">-28</div>
<div class="t" style="right:1007px;top:663.47px;font-size:13px;color:#333;">-26</div>
<div class="t" style="right:962px;top:663.47px;font-size:13px;color:#333;">-24</div>
<div class="t" style="right:917px;top:663.47px;font-size:13px;color:#333;">-22</div>
<div class="t" style="right:872px;top:663.47px;font-size:13px;color:#333;">-24</div>
<div class="t" style="right:827px;top:663.47px;font-size:13px;color:#333;">-25</div>
<div class="t" style="right:782px;top:663.47px;font-size:13px;color:#333;">-23</div>
<div class="t" style="right:737px;top:663.47px;font-size:13px;color:#333;">-24</div>
<div class="t" style="right:692px;top:663.47px;font-size:13px;color:#333;">-25</div>
<div class="t" style="right:647px;top:663.47px;font-size:13px;color:#333;">-25</div>
<div class="t" style="right:602px;top:663.47px;font-size:13px;color:#333;">-25</div>
<div class="t" style="right:557px;top:663.47px;font-size:13px;color:#333;">-21</div>
<div class="t" style="right:512px;top:663.47px;font-size:13px;color:#333;">-23</div>
<div class="t" style="right:467px;top:663.47px;font-size:13px;color:#333;">-21</div>
<div class="t" style="right:422px;top:663.47px;font-size:13px;color:#333;">-24</div>
<div class="t" style="right:377px;top:663.47px;font-size:13px;color:#333;">-24</div>
<div class="t" style="right:332px;top:663.47px;font-size:13px;color:#333;">-23</div>
<div class="t" style="right:287px;top:663.47px;font-size:13px;color:#333;">-23</div>
<div class="t" style="right:242px;top:663.47px;font-size:13px;color:#333;">-24</div>
<div class="t" style="right:197px;top:663.47px;font-size:13px;color:#333;">-25</div>
<div class="t" style="right:152px;top:663.47px;font-size:13px;color:#333;">-25</div>
<div class="t" style="right:107px;top:663.47px;font-size:13px;color:#333;">-25</div>
<div class="t" style="right:62px;top:663.47px;font-size:13px;color:#333;">-26</div>
<div class="t" style="right:17px;top:663.47px;font-size:13px;color:#333;">-25</div>
<div class="abs" style="left:199px;top:688px;width:1472px;height:1px;background:#e6e6e6"></div>
<div class="t" style="left:205px;top:701.47px;font-size:13px;color:#333;">Adjusted Required Staff with Shrinkage</div>
<div class="t" style="right:1097px;top:701.47px;font-size:13px;color:#333;">28</div>
<div class="t" style="right:1052px;top:701.47px;font-size:13px;color:#333;">28</div>
<div class="t" style="right:1007px;top:701.47px;font-size:13px;color:#333;">28</div>
<div class="t" style="right:962px;top:701.47px;font-size:13px;color:#333;">26</div>
<div class="t" style="right:917px;top:701.47px;font-size:13px;color:#333;">24</div>
<div class="t" style="right:872px;top:701.47px;font-size:13px;color:#333;">26</div>
<div class="t" style="right:827px;top:701.47px;font-size:13px;color:#333;">26</div>
<div class="t" style="right:782px;top:701.47px;font-size:13px;color:#333;">24</div>
<div class="t" style="right:737px;top:701.47px;font-size:13px;color:#333;">25</div>
<div class="t" style="right:692px;top:701.47px;font-size:13px;color:#333;">26</div>
<div class="t" style="right:647px;top:701.47px;font-size:13px;color:#333;">26</div>
<div class="t" style="right:602px;top:701.47px;font-size:13px;color:#333;">26</div>
<div class="t" style="right:557px;top:701.47px;font-size:13px;color:#333;">23</div>
<div class="t" style="right:512px;top:701.47px;font-size:13px;color:#333;">24</div>
<div class="t" style="right:467px;top:701.47px;font-size:13px;color:#333;">23</div>
<div class="t" style="right:422px;top:701.47px;font-size:13px;color:#333;">25</div>
<div class="t" style="right:377px;top:701.47px;font-size:13px;color:#333;">26</div>
<div class="t" style="right:332px;top:701.47px;font-size:13px;color:#333;">25</div>
<div class="t" style="right:287px;top:701.47px;font-size:13px;color:#333;">25</div>
<div class="t" style="right:242px;top:701.47px;font-size:13px;color:#333;">25</div>
<div class="t" style="right:197px;top:701.47px;font-size:13px;color:#333;">26</div>
<div class="t" style="right:152px;top:701.47px;font-size:13px;color:#333;">26</div>
<div class="t" style="right:107px;top:701.47px;font-size:13px;color:#333;">25</div>
<div class="t" style="right:62px;top:701.47px;font-size:13px;color:#333;">26</div>
<div class="t" style="right:17px;top:701.47px;font-size:13px;color:#333;">25</div>
<div class="abs" style="left:199px;top:726px;width:1472px;height:1px;background:#e6e6e6"></div>
<div class="t" style="left:205px;top:739.47px;font-size:13px;color:#333;">Adjusted Difference with Shrinkage</div>
<div class="t" style="right:1097px;top:739.47px;font-size:13px;color:#333;">-28</div>
<div class="t" style="right:1052px;top:739.47px;font-size:13px;color:#333;">-28</div>
<div class="t" style="right:1007px;top:739.47px;font-size:13px;color:#333;">-26</div>
<div class="t" style="right:962px;top:739.47px;font-size:13px;color:#333;">-24</div>
<div class="t" style="right:917px;top:739.47px;font-size:13px;color:#333;">-22</div>
<div class="t" style="right:872px;top:739.47px;font-size:13px;color:#333;">-24</div>
<div class="t" style="right:827px;top:739.47px;font-size:13px;color:#333;">-25</div>
<div class="t" style="right:782px;top:739.47px;font-size:13px;color:#333;">-23</div>
<div class="t" style="right:737px;top:739.47px;font-size:13px;color:#333;">-24</div>
<div class="t" style="right:692px;top:739.47px;font-size:13px;color:#333;">-25</div>
<div class="t" style="right:647px;top:739.47px;font-size:13px;color:#333;">-25</div>
<div class="t" style="right:602px;top:739.47px;font-size:13px;color:#333;">-25</div>
<div class="t" style="right:557px;top:739.47px;font-size:13px;color:#333;">-21</div>
<div class="t" style="right:512px;top:739.47px;font-size:13px;color:#333;">-23</div>
<div class="t" style="right:467px;top:739.47px;font-size:13px;color:#333;">-21</div>
<div class="t" style="right:422px;top:739.47px;font-size:13px;color:#333;">-24</div>
<div class="t" style="right:377px;top:739.47px;font-size:13px;color:#333;">-24</div>
<div class="t" style="right:332px;top:739.47px;font-size:13px;color:#333;">-23</div>
<div class="t" style="right:287px;top:739.47px;font-size:13px;color:#333;">-23</div>
<div class="t" style="right:242px;top:739.47px;font-size:13px;color:#333;">-24</div>
<div class="t" style="right:197px;top:739.47px;font-size:13px;color:#333;">-25</div>
<div class="t" style="right:152px;top:739.47px;font-size:13px;color:#333;">-25</div>
<div class="t" style="right:107px;top:739.47px;font-size:13px;color:#333;">-25</div>
<div class="t" style="right:62px;top:739.47px;font-size:13px;color:#333;">-26</div>
<div class="t" style="right:17px;top:739.47px;font-size:13px;color:#333;">-25</div>
<div class="abs" style="left:199px;top:764px;width:1472px;height:1px;background:#e6e6e6"></div>
<div class="abs" style="left:199px;top:765px;width:1472px;height:50px;background:linear-gradient(to bottom,#f5f5f5 0%,#f4f4f4 55%,#e6e7e7 100%)"></div>
<svg class="abs" style="left:205.5px;top:786.5px;" width="11" height="8" viewBox="0 0 11 8"><path d="M1.2 1.5l4.3 4.3 4.3-4.3" fill="none" stroke="#333" stroke-width="2"/></svg>
<div class="t" style="left:222px;top:783.06px;font-size:14px;color:#333;font-weight:700;letter-spacing:-0.45px;">Performance</div>
<svg class="abs" style="left:309.5px;top:783px;" width="13" height="13" viewBox="0 0 13 13"><circle cx="6.5" cy="6.5" r="6" fill="#555"/><circle cx="6.5" cy="3.4" r="1.1" fill="#fff"/><path d="M5 5.3h2.3v3.9h0.9v1.2H4.9V9.2h0.9V6.5H5z" fill="#fff"/></svg>
<div class="abs" style="left:366px;top:775.5px;width:159.5px;height:29px;background:#fbfbfb;border:1px solid #e3e3e3;border-radius:5px"></div>
<div class="t" style="left:376px;top:784.68px;font-size:12px;color:#333;letter-spacing:-0.15px;">&lt;All Planning Groups&gt;</div>
<div class="abs" style="left:511px;top:787.5px;width:0;height:0;border-left:3.75px solid transparent;border-right:3.75px solid transparent;border-top:4.1px solid #333"></div>
<div class="abs" style="left:0px;top:815px;width:1671px;height:12px;background:linear-gradient(to bottom,#a9a9a9 0%,#a6a6a6 70%,#acacac 100%)"></div>
<div class="abs" style="left:1645px;top:815px;width:26px;height:12px;background:#6f98d4"></div>
<div class="abs" style="left:1669px;top:612px;width:1px;height:152px;background:#cfcfcf"></div>
<svg class="abs" style="left:1397px;top:782.5px;" width="18" height="18" viewBox="0 0 18 18"><rect x="0.8" y="0.8" width="2.7" height="2.7" fill="none" stroke="#3d65b2" stroke-width="1.1"/><rect x="5.3" y="0.8" width="2.7" height="2.7" fill="none" stroke="#3d65b2" stroke-width="1.1"/><rect x="9.8" y="0.8" width="2.7" height="2.7" fill="none" stroke="#3d65b2" stroke-width="1.1"/><rect x="14.3" y="0.8" width="2.7" height="2.7" fill="none" stroke="#3d65b2" stroke-width="1.1"/><rect x="0.8" y="5.1" width="2.7" height="2.7" fill="none" stroke="#3d65b2" stroke-width="1.1"/><rect x="5.3" y="5.1" width="2.7" height="2.7" fill="none" stroke="#3d65b2" stroke-width="1.1"/><rect x="9.8" y="5.1" width="2.7" height="2.7" fill="none" stroke="#3d65b2" stroke-width="1.1"/><rect x="14.3" y="5.1" width="2.7" height="2.7" fill="none" stroke="#3d65b2" stroke-width="1.1"/><rect x="0.8" y="9.4" width="2.7" height="2.7" fill="none" stroke="#3d65b2" stroke-width="1.1"/><rect x="5.3" y="9.4" width="2.7" height="2.7" fill="none" stroke="#3d65b2" stroke-width="1.1"/><rect x="9.8" y="9.4" width="2.7" height="2.7" fill="none" stroke="#3d65b2" stroke-width="1.1"/><rect x="14.3" y="9.4" width="2.7" height="2.7" fill="none" stroke="#3d65b2" stroke-width="1.1"/><rect x="0.8" y="13.7" width="2.7" height="2.7" fill="none" stroke="#3d65b2" stroke-width="1.1"/><rect x="5.3" y="13.7" width="2.7" height="2.7" fill="none" stroke="#3d65b2" stroke-width="1.1"/><rect x="9.8" y="13.7" width="2.7" height="2.7" fill="none" stroke="#3d65b2" stroke-width="1.1"/><rect x="14.3" y="13.7" width="2.7" height="2.7" fill="none" stroke="#3d65b2" stroke-width="1.1"/></svg>
<svg class="abs" style="left:1445px;top:782px;" width="19" height="17" viewBox="0 0 19 17"><circle cx="6.5" cy="4.6" r="3.5" fill="none" stroke="#3d65b2" stroke-width="1.6"/><path d="M1 16.2c0-3.6 2.4-5.8 5.5-5.8s5.5 2.2 5.5 5.8" fill="none" stroke="#3d65b2" stroke-width="1.6"/><path d="M13.2 3.2c1.2 1 1.9 2.3 1.9 3.8s-0.7 2.8-1.9 3.8M15.6 1c1.8 1.6 2.8 3.6 2.8 6s-1 4.4-2.8 6" fill="none" stroke="#3d65b2" stroke-width="1.4"/></svg>
<svg class="abs" style="left:1493px;top:784px;" width="18" height="14" viewBox="0 0 18 14"><rect x="1" y="1" width="16" height="12" rx="1.6" fill="none" stroke="#3d65b2" stroke-width="1.7"/><path d="M1.8 2l7.2 5.8 7.2-5.8" fill="none" stroke="#3d65b2" stroke-width="1.7"/></svg>
<svg class="abs" style="left:1541px;top:782.5px;" width="18" height="18" viewBox="0 0 18 18"><path d="M9 1.2c4.3 0 7.6 2.9 7.6 6.8s-3.3 6.8-7.6 6.8c-1 0-2-0.2-2.9-0.5L2.2 16.6l1-3.3C1.9 12 1.3 10.2 1.3 8c0-3.9 3.4-6.8 7.7-6.8z" fill="none" stroke="#aaa" stroke-width="1.5"/><path d="M5.5 6.6h7M5.5 9.4h5" stroke="#aaa" stroke-width="1.5"/></svg>
<svg class="abs" style="left:1589px;top:782px;" width="18" height="18" viewBox="0 0 18 18"><path d="M2.6 2.6l2.6-0.9 1.9 3.6-1.5 1.5c0.7 2 2.3 3.7 4.3 4.4l1.5-1.5 3.6 1.9-0.9 2.6c-0.3 0.8-1.1 1.3-2 1.2C6.6 14.8 2.4 10.6 1.8 4.6c-0.1-0.9 0.4-1.7 0.8-2z" fill="none" stroke="#3d65b2" stroke-width="1.5" stroke-linejoin="round"/><path d="M16.8 4H10.2M13 1.2L10.2 4 13 6.8" fill="none" stroke="#3d65b2" stroke-width="1.5"/></svg>
<svg class="abs" style="left:1637px;top:782.5px;" width="18" height="18" viewBox="0 0 18 18"><path d="M2.2 1h13.6a1.2 1.2 0 0 1 1.2 1.2v9.6a1.2 1.2 0 0 1-1.2 1.2H8.5l-3.6 3.3V13H2.2A1.2 1.2 0 0 1 1 11.8V2.2A1.2 1.2 0 0 1 2.2 1z" fill="none" stroke="#3d65b2" stroke-width="1.6"/><path d="M4.8 5.4h8.4M4.8 8.4h5.4" stroke="#3d65b2" stroke-width="1.5"/></svg>
<div class="abs" style="left:1354px;top:127.5px;width:305.5px;height:359px;background:#fbfcfc;border:1px solid #d6d6d6;border-radius:4px;box-shadow:0 2px 4px rgba(0,0,0,0.12)"></div>
<div class="abs" style="left:1355px;top:131px;width:304px;height:27px;background:#3a5dc0"></div>
<div class="t" style="left:1364px;top:137.16px;font-size:14px;color:#fff;letter-spacing:-0.1px;">Assign Shift</div>
<div class="t" style="left:1604.5px;top:137.16px;font-size:14px;color:#a9b3cc;letter-spacing:-0.1px;">Shift Q</div>
<div class="t" style="left:1364px;top:164.16px;font-size:14px;color:#333;letter-spacing:-0.1px;">Replace Shifts with Activity</div>
<div class="t" style="left:1604.5px;top:164.16px;font-size:14px;color:#a6a6a6;letter-spacing:-0.1px;">Shift R</div>
<div class="t" style="left:1364px;top:191.16px;font-size:14px;color:#333;letter-spacing:-0.1px;">Replace Activity</div>
<div class="t" style="left:1604.5px;top:191.16px;font-size:14px;color:#a6a6a6;letter-spacing:-0.1px;">Shift B</div>
<div class="t" style="left:1364px;top:218.16px;font-size:14px;color:#333;letter-spacing:-0.1px;">Swap Shifts</div>
<div class="t" style="left:1604.5px;top:218.16px;font-size:14px;color:#a6a6a6;letter-spacing:-0.1px;">Shift W</div>
<div class="t" style="left:1364px;top:245.16px;font-size:14px;color:#333;letter-spacing:-0.1px;">Copy Activity to Agents</div>
<div class="t" style="left:1604.5px;top:245.16px;font-size:14px;color:#a6a6a6;letter-spacing:-0.1px;">Shift A</div>
<div class="t" style="left:1364px;top:272.16px;font-size:14px;color:#333;letter-spacing:-0.1px;">Copy Shift to Agents</div>
<div class="t" style="left:1604.5px;top:272.16px;font-size:14px;color:#a6a6a6;letter-spacing:-0.1px;">Shift M</div>
<div class="t" style="left:1364px;top:299.16px;font-size:14px;color:#333;letter-spacing:-0.1px;">Copy Shift to Days</div>
<div class="t" style="left:1604.5px;top:299.16px;font-size:14px;color:#a6a6a6;letter-spacing:-0.1px;">Shift D</div>
<div class="t" style="left:1364px;top:326.16px;font-size:14px;color:#333;letter-spacing:-0.1px;">Remove Selected</div>
<div class="t" style="left:1604.5px;top:326.16px;font-size:14px;color:#a6a6a6;letter-spacing:-0.1px;">Delete</div>
<div class="t" style="left:1364px;top:353.16px;font-size:14px;color:#333;letter-spacing:-0.1px;">Remove Activity Code in Range</div>
<div class="t" style="left:1364px;top:380.16px;font-size:14px;color:#333;letter-spacing:-0.1px;">Add Agents</div>
<div class="t" style="left:1364px;top:407.16px;font-size:14px;color:#333;letter-spacing:-0.1px;">Remove Agents</div>
<div class="t" style="left:1364px;top:434.16px;font-size:14px;color:#333;letter-spacing:-0.1px;">Show Time-Off Request Differences</div>
<div class="t" style="left:1604.5px;top:434.16px;font-size:14px;color:#a6a6a6;letter-spacing:-0.1px;">Shift V</div>
<div class="t" style="left:1364px;top:461.16px;font-size:14px;color:#333;letter-spacing:-0.1px;">Show Keyboard Shortcuts</div>
<div class="t" style="left:1604.5px;top:461.16px;font-size:14px;color:#a6a6a6;letter-spacing:-0.1px;">Shift K</div>
<svg class="abs" style="left:1608.6px;top:111px;" width="17" height="17" viewBox="0 0 17 17"><g transform="translate(0.7,0.6)"><path d="M3.1 1.3a1.3 1.3 0 0 1 2.6 0V6.2a1.2 1.2 0 0 1 2.4 0.3a1.2 1.2 0 0 1 2.4 0.4a1.2 1.2 0 0 1 2.4 0.6V10.5c0 2.4-1.4 4.2-3.8 4.2H6.9c-1.2 0-2-0.5-2.6-1.4L0.9 8.9a1.1 1.1 0 0 1 1.6-1.4L3.1 8.2z" fill="#fff" stroke="#111" stroke-width="1.15" stroke-linejoin="round"/><path d="M7.3 10.4v2.8M9.4 10.4v2.8M11.5 10.4v2.8" stroke="#111" stroke-width="0.9"/></g></svg>
</body></html>
